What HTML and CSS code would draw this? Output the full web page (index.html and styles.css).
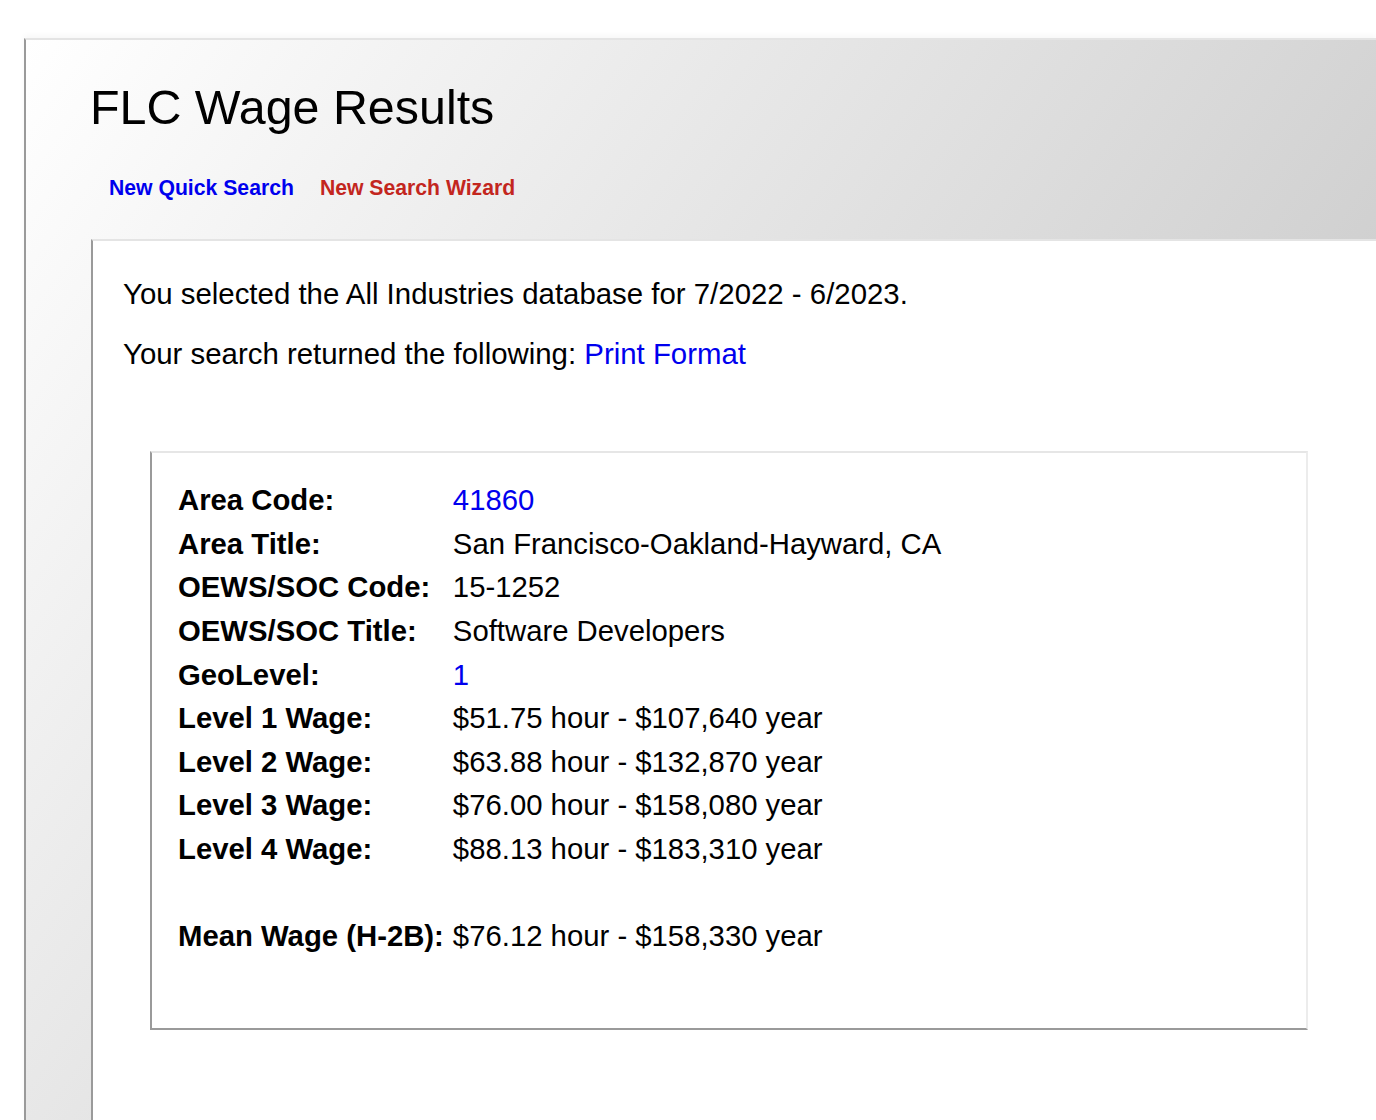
FILE: index.html
```html
<!DOCTYPE html>
<html lang="en">
<head>
<meta charset="utf-8">
<title>FLC Wage Results</title>
<link rel="stylesheet" href="styles.css">
</head>
<body>
<div class="page">
  <header class="header">
    <h1 class="title">FLC Wage Results</h1>
    <nav class="nav">
      <a class="nav-link quick" href="#">New Quick Search</a>
      <a class="nav-link wizard" href="#">New Search Wizard</a>
    </nav>
  </header>
  <main class="panel">
    <p class="line">You selected the All Industries database for 7/2022 - 6/2023.</p>
    <p class="line">Your search returned the following: <a class="link" href="#">Print Format</a></p>
    <section class="results">
      <table class="data">
        <tbody>
          <tr><th>Area Code:</th><td><a class="link" href="#">41860</a></td></tr>
          <tr><th>Area Title:</th><td>San Francisco-Oakland-Hayward, CA</td></tr>
          <tr><th>OEWS/SOC Code:</th><td>15-1252</td></tr>
          <tr><th>OEWS/SOC Title:</th><td>Software Developers</td></tr>
          <tr><th>GeoLevel:</th><td><a class="link" href="#">1</a></td></tr>
          <tr><th>Level 1 Wage:</th><td>$51.75 hour - $107,640 year</td></tr>
          <tr><th>Level 2 Wage:</th><td>$63.88 hour - $132,870 year</td></tr>
          <tr><th>Level 3 Wage:</th><td>$76.00 hour - $158,080 year</td></tr>
          <tr><th>Level 4 Wage:</th><td>$88.13 hour - $183,310 year</td></tr>
          <tr class="spacer"><td colspan="2">&nbsp;</td></tr>
          <tr><th>Mean Wage (H-2B):</th><td>$76.12 hour - $158,330 year</td></tr>
        </tbody>
      </table>
    </section>
  </main>
</div>
</body>
</html>
```

FILE: styles.css
```css
html, body {
  margin: 0;
  padding: 0;
  height: 100%;
  overflow: hidden;
  background: #ffffff;
}

body {
  font-family: "Liberation Sans", Arial, Helvetica, sans-serif;
  color: #000;
}

.page {
  margin: 38px 0 0 24px;
  min-height: calc(100vh - 40px);
  border-left: 2px solid #9a9a9a;
  border-top: 2px solid #e4e4e4;
  box-shadow: 0 -3px 5px rgba(0, 0, 0, 0.03);
  background: linear-gradient(125deg, #ffffff 0%, #bdbdbd 100%);
  display: flex;
  flex-direction: column;
}

.header {
  padding: 40px 0 39px 64px;
}

.title {
  margin: 0;
  font-size: 48.4px;
  font-weight: normal;
  line-height: 1.15;
}

.nav {
  margin: 40px 0 0 19px;
  display: flex;
  gap: 26px;
  font-size: 21.2px;
  line-height: 1.15;
  font-weight: bold;
}

.nav-link {
  text-decoration: none;
}

.quick {
  color: #0000ee;
}

.wizard {
  color: #c3261e;
}

.panel {
  flex: 1;
  margin-left: 65px;
  border-left: 2px solid #9a9a9a;
  border-top: 2px solid #e4e4e4;
  background: #ffffff;
  padding: 36px 0 0 30px;
  font-size: 29.4px;
  line-height: 1.15;
}

.line {
  margin: 0 0 26px 0;
}

.link {
  color: #0000ee;
  text-decoration: none;
}

.results {
  margin: 80.5px 0 0 26.5px;
  width: 1158px;
  border-top: 2px solid #e6e6e6;
  border-left: 2px solid #9a9a9a;
  border-bottom: 2px solid #9a9a9a;
  border-right: 2px solid #ececec;
  padding: 25px 0 70px 26.5px;
  box-sizing: border-box;
}

.data {
  border-collapse: collapse;
  font-size: 29.3px;
  line-height: 43.6px;
}

.data th,
.data td {
  padding: 0;
  vertical-align: baseline;
  white-space: nowrap;
}

.data th {
  text-align: left;
  font-weight: bold;
  padding-right: 9px;
}

.spacer td {
  height: 43.6px;
}
```
